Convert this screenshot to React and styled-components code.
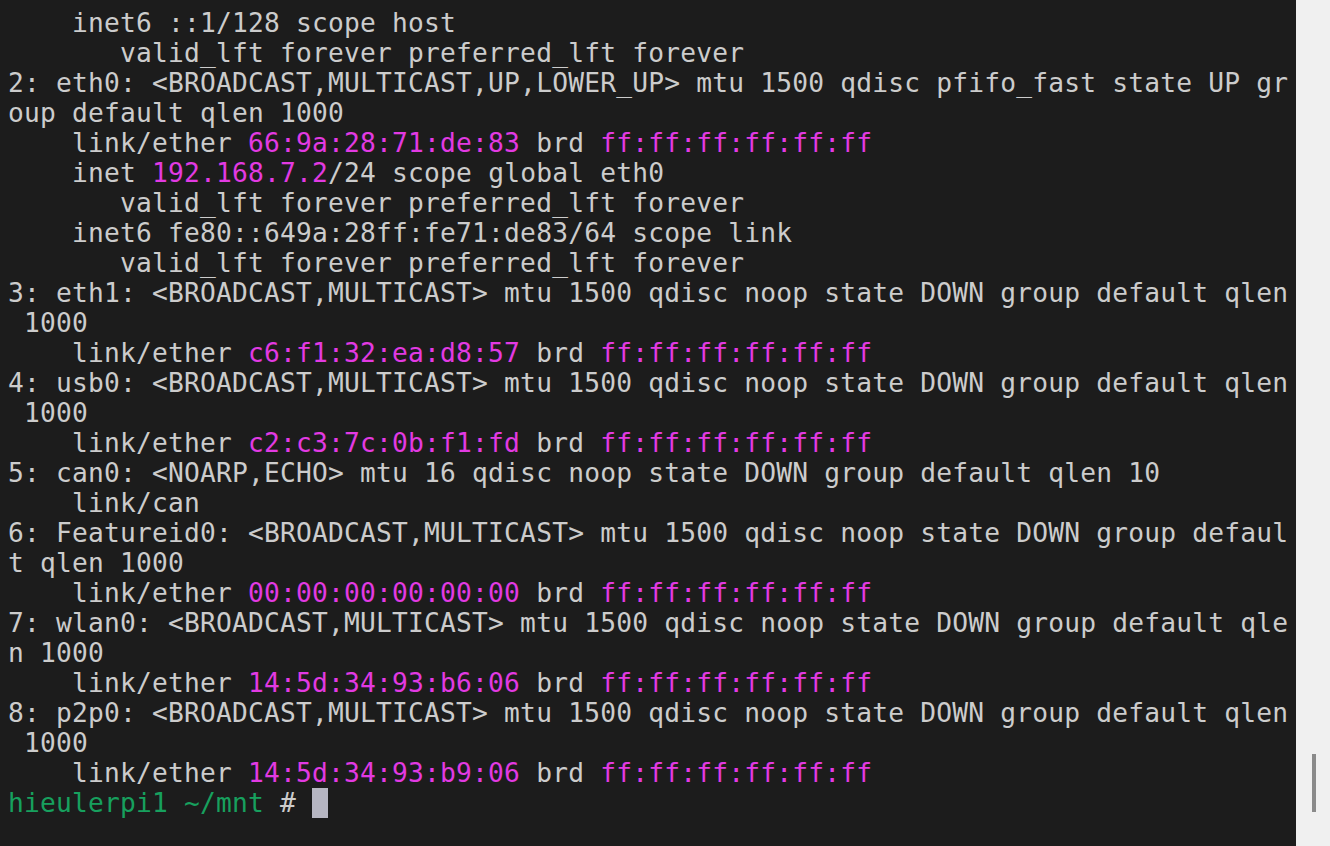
import styled, { createGlobalStyle } from "styled-components";

const GlobalStyle = createGlobalStyle`
  html, body {
    margin: 0;
    padding: 0;
    background: #1c1c1c;
    overflow: hidden;
  }
`;

const Window = styled.div`
  display: flex;
  width: 1330px;
  height: 846px;
`;

const Terminal = styled.div`
  flex: 1;
  background: #1c1c1c;
  color: #cccccc;
  padding: 8px 0 0 8px;
  font-family: "DejaVu Sans Mono", "Liberation Mono", monospace;
  font-size: 26.25px;
  letter-spacing: 0.2px;
  line-height: 30px;
  overflow: hidden;
`;

const Line = styled.div`
  height: 30px;
  white-space: pre;
`;

const Mag = styled.span`
  color: #e23ae2;
`;

const Prompt = styled.span`
  color: #17a05e;
`;

const Cursor = styled.span`
  display: inline-block;
  width: 16px;
  height: 30px;
  vertical-align: top;
  background: #b6b6c2;
`;

const ScrollTrack = styled.div`
  width: 34px;
  background: #f0f0f0;
  display: flex;
  flex-direction: column;
  justify-content: flex-end;
  padding-bottom: 34px;
  box-sizing: border-box;
`;

const Thumb = styled.div`
  width: 4px;
  height: 58px;
  margin-left: 16px;
  background: #8a8a8a;
`;

const BRD = "ff:ff:ff:ff:ff:ff";
const VALID = "       valid_lft forever preferred_lft forever";

const Ether = ({ mac }) => (
  <Line>
    {"    link/ether "}<Mag>{mac}</Mag>{" brd "}<Mag>{BRD}</Mag>
  </Line>
);

export default function App() {
  return (
    <>
      <GlobalStyle />
      <Window>
        <Terminal>
          <Line>{"    inet6 ::1/128 scope host"}</Line>
          <Line>{VALID}</Line>
          <Line>{"2: eth0: <BROADCAST,MULTICAST,UP,LOWER_UP> mtu 1500 qdisc pfifo_fast state UP gr"}</Line>
          <Line>{"oup default qlen 1000"}</Line>
          <Ether mac="66:9a:28:71:de:83" />
          <Line>
            {"    inet "}<Mag>192.168.7.2</Mag>{"/24 scope global eth0"}
          </Line>
          <Line>{VALID}</Line>
          <Line>{"    inet6 fe80::649a:28ff:fe71:de83/64 scope link"}</Line>
          <Line>{VALID}</Line>
          <Line>{"3: eth1: <BROADCAST,MULTICAST> mtu 1500 qdisc noop state DOWN group default qlen"}</Line>
          <Line>{" 1000"}</Line>
          <Ether mac="c6:f1:32:ea:d8:57" />
          <Line>{"4: usb0: <BROADCAST,MULTICAST> mtu 1500 qdisc noop state DOWN group default qlen"}</Line>
          <Line>{" 1000"}</Line>
          <Ether mac="c2:c3:7c:0b:f1:fd" />
          <Line>{"5: can0: <NOARP,ECHO> mtu 16 qdisc noop state DOWN group default qlen 10"}</Line>
          <Line>{"    link/can"}</Line>
          <Line>{"6: Featureid0: <BROADCAST,MULTICAST> mtu 1500 qdisc noop state DOWN group defaul"}</Line>
          <Line>{"t qlen 1000"}</Line>
          <Ether mac="00:00:00:00:00:00" />
          <Line>{"7: wlan0: <BROADCAST,MULTICAST> mtu 1500 qdisc noop state DOWN group default qle"}</Line>
          <Line>{"n 1000"}</Line>
          <Ether mac="14:5d:34:93:b6:06" />
          <Line>{"8: p2p0: <BROADCAST,MULTICAST> mtu 1500 qdisc noop state DOWN group default qlen"}</Line>
          <Line>{" 1000"}</Line>
          <Ether mac="14:5d:34:93:b9:06" />
          <Line>
            <Prompt>hieulerpi1 ~/mnt</Prompt>{" # "}<Cursor />
          </Line>
        </Terminal>
        <ScrollTrack>
          <Thumb />
        </ScrollTrack>
      </Window>
    </>
  );
}
